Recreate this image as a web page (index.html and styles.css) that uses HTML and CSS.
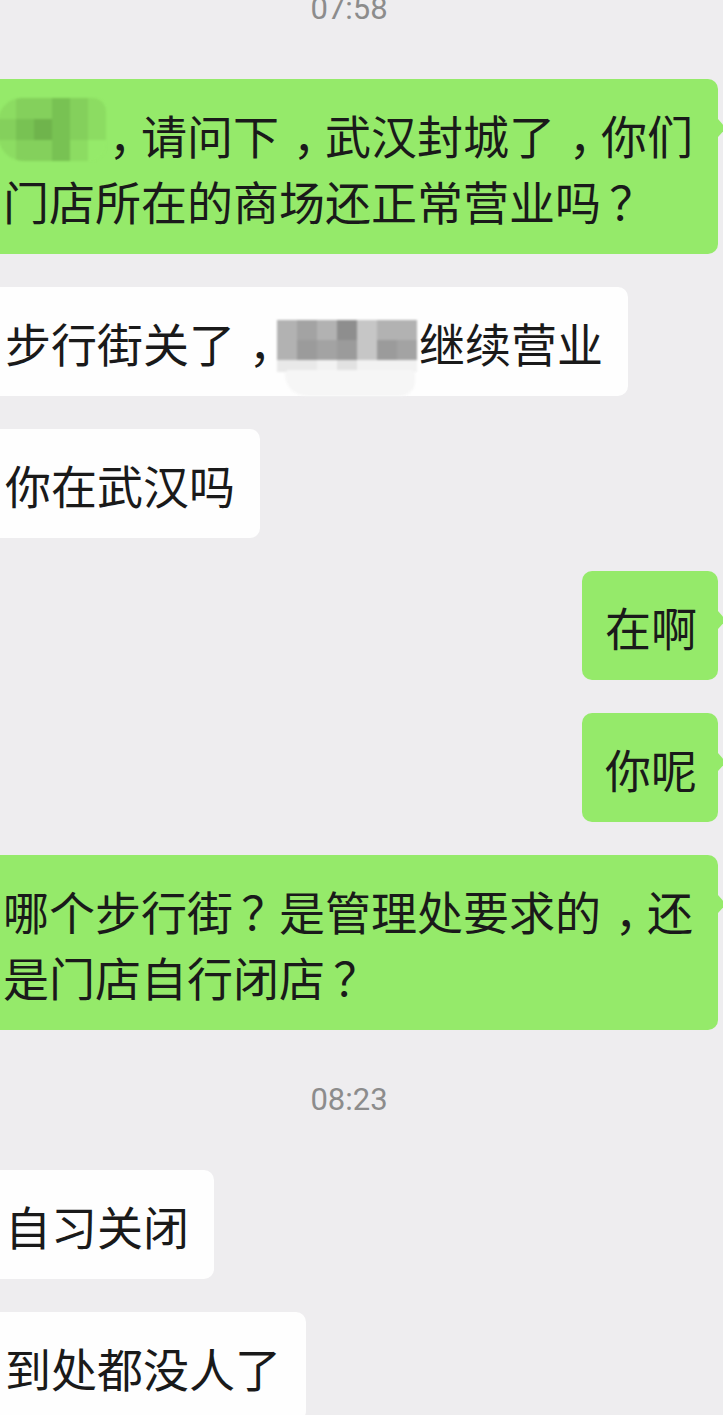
FILE: index.html
```html
<!DOCTYPE html>
<html lang="zh-CN">
<head>
<meta charset="utf-8">
<title>聊天记录</title>
<link rel="stylesheet" href="styles.css">
</head>
<body>
<div class="chat">
  <div class="time first">07:58</div>

  <div class="row right">
    <div class="bubble green"><span class="mosaic m-green"><i class="g1"></i><i class="g2"></i><i class="g2"></i><i class="g4"></i><i class="g2"></i><i class="g1"></i><i class="g2"></i><i class="g4"></i><i class="g3"></i><i class="g4"></i><i class="g2"></i><i class="g1"></i><i class="g1"></i><i class="g2"></i><i class="g2"></i><i class="g4"></i><i class="g1"></i><i class="g0"></i></span><span class="p comma">，</span>请问下<span class="p comma">，</span>武汉封城了<span class="p comma">，</span>你们门店所在的商场还正常营业吗<span class="p ques">？</span></div>
  </div>

  <div class="row left">
    <div class="bubble white">步行街关了<span class="p comma">，</span><span class="mosaic m-grey"><i class="k2"></i><i class="k3"></i><i class="k2"></i><i class="k5"></i><i class="k1"></i><i class="k2"></i><i class="k2"></i><i class="k2"></i><i class="k4"></i><i class="k3"></i><i class="k4"></i><i class="k1"></i><i class="k4"></i><i class="k3"></i><i class="k8"></i><i class="k8"></i><i class="k9"></i><i class="k7"></i><i class="k9"></i><i class="k9"></i><i class="k9"></i></span>继续营业</div>
  </div>

  <div class="row left">
    <div class="bubble white">你在武汉吗</div>
  </div>

  <div class="row right">
    <div class="bubble green">在啊</div>
  </div>

  <div class="row right">
    <div class="bubble green">你呢</div>
  </div>

  <div class="row right">
    <div class="bubble green">哪个步行街<span class="p ques">？</span>是管理处要求的<span class="p comma">，</span>还是门店自行闭店<span class="p ques">？</span></div>
  </div>

  <div class="time">08:23</div>

  <div class="row left">
    <div class="bubble white">自习关闭</div>
  </div>

  <div class="row left">
    <div class="bubble white">到处都没人了</div>
  </div>
</div>
</body>
</html>
```

FILE: styles.css
```css
html, body {
  margin: 0;
  padding: 0;
  height: 1415px;
  overflow: hidden;
  background: #eeedef;
}

.chat {
  display: flex;
  flex-direction: column;
  gap: 33px;
  width: 738px;
  margin-left: -20px;
  font-family: "Noto Sans CJK SC", "Noto Sans", sans-serif;
  color: #1a1a1a;
}

.time {
  height: 74px;
  line-height: 74px;
  text-align: center;
  font-family: Roboto, "Liberation Sans", sans-serif;
  font-size: 31px;
  color: #8c8c8c;
}

.time.first {
  margin-top: -28px;
}

.row {
  display: flex;
}

.row.left {
  justify-content: flex-start;
}

.row.right {
  justify-content: flex-end;
}

.bubble {
  position: relative;
  max-width: 100%;
  box-sizing: border-box;
  font-size: 46px;
  line-height: 66px;
  border-radius: 10px;
  word-break: break-all;
}

/* full-width punctuation drawn centred in its em box, as on the phone */
.p {
  display: inline-block;
  width: 1em;
  white-space: nowrap;
  overflow: visible;
}

.p.comma {
  text-indent: 0.3em;
}

.p.ques {
  text-indent: 0.18em;
}

.bubble.white {
  background: #fefefe;
  padding: 21.5px 25px 21.5px 25px;
}

.bubble.green {
  background: #95ea6a;
  padding: 21.5px 21px 21.5px 23px;
}

.bubble.green::after {
  content: "";
  position: absolute;
  right: -8px;
  top: 40px;
  border-top: 9px solid transparent;
  border-bottom: 9px solid transparent;
  border-left: 8px solid #95ea6a;
}

.bubble.white::before {
  content: "";
  position: absolute;
  left: -8px;
  top: 40px;
  border-top: 9px solid transparent;
  border-bottom: 9px solid transparent;
  border-right: 8px solid #fefefe;
}

/* mosaic (pixelated name) */
.mosaic {
  display: inline-grid;
  vertical-align: top;
  filter: blur(1px);
}

.mosaic i {
  display: block;
}

.m-green {
  grid-template-columns: repeat(6, 18px);
  grid-template-rows: repeat(3, 21px);
  width: 108px;
  height: 63px;
  margin: -3px -11px 0 -5px;
  border-radius: 24px 14px 16px 26px;
  overflow: hidden;
}

.g0 { background: #95ea6a; }
.g1 { background: #8cdc62; }
.g2 { background: #84d05c; }
.g3 { background: #6fb44c; }
.g4 { background: #78c253; }

.m-grey {
  position: relative;
  grid-template-columns: repeat(7, 20px);
  grid-template-rows: 20px 20px 12px;
  width: 140px;
  height: 52px;
  margin: 11px 2px 0 -4px;
  border-radius: 0 16px 0 0;
}

.m-grey::after {
  content: "";
  position: absolute;
  left: 8px;
  top: 50px;
  width: 130px;
  height: 26px;
  background: #f6f6f6;
  border-radius: 6px 6px 20px 30px;
}

.k1 { background: #c6c6c6; }
.k2 { background: #b2b2b2; }
.k3 { background: #a3a3a3; }
.k4 { background: #9b9b9b; }
.k5 { background: #8e8e8e; }
.k7 { background: #e2e2e2; }
.k8 { background: #e9e9e9; }
.k9 { background: #f2f2f2; }
```
